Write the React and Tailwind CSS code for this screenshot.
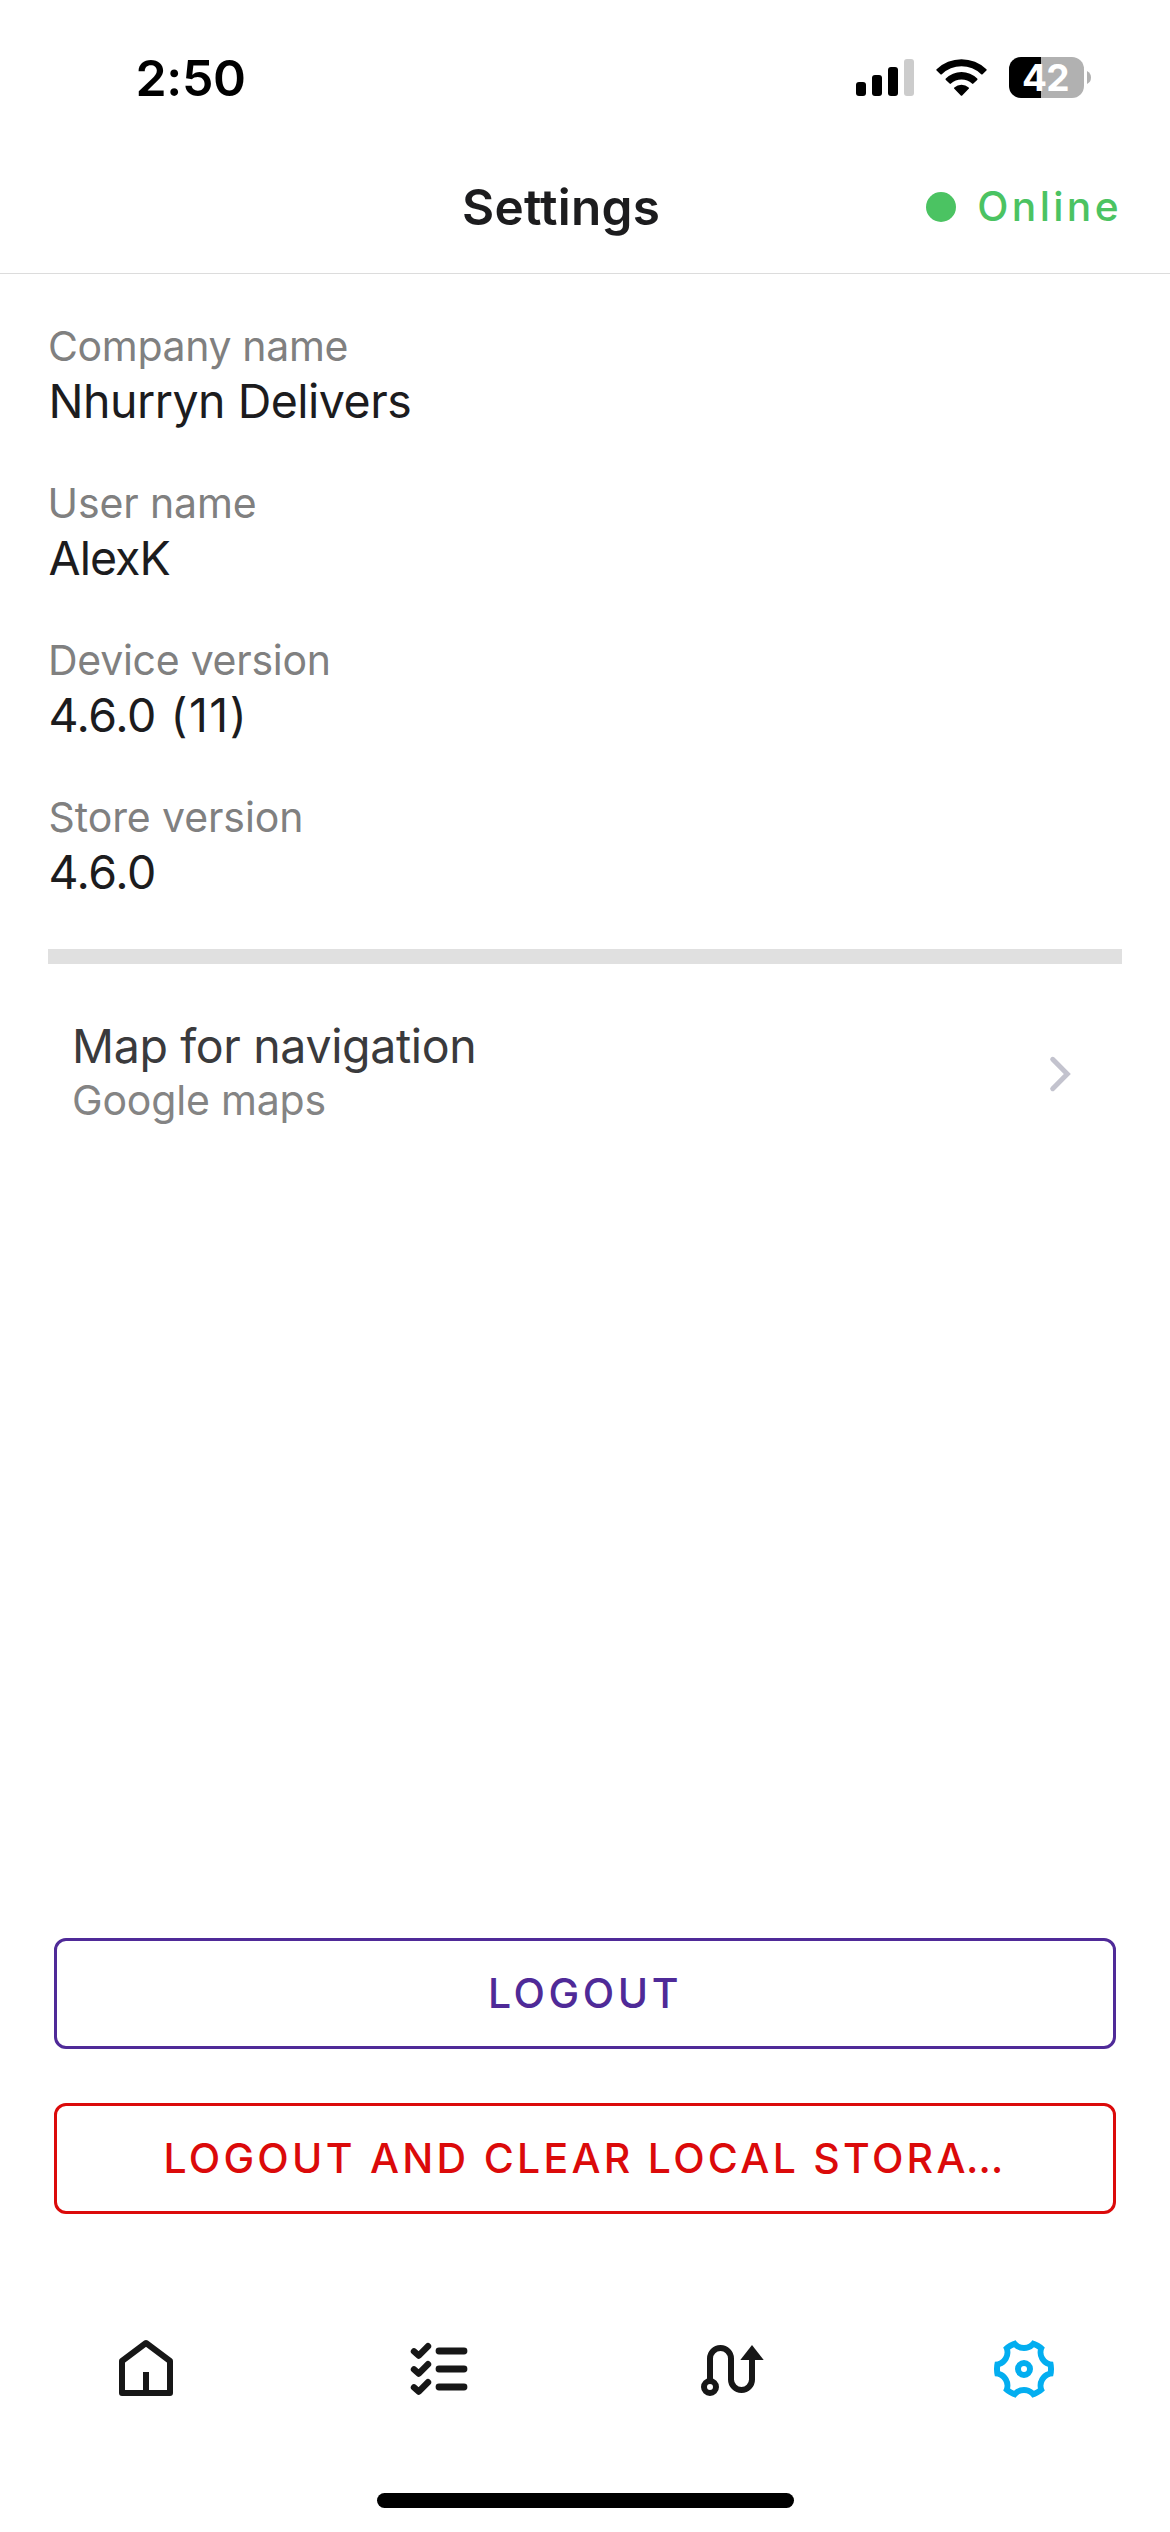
import React from "react";

const DETAILS = [
  { label: "Company name", value: "Nhurryn Delivers", labelClass: "-ml-[0.5px] tracking-[-0.35px]", valueClass: "tracking-[-0.5px]" },
  { label: "User name", value: "AlexK", labelClass: "-ml-px tracking-[-0.11px]", valueClass: "tracking-[-0.95px]" },
  { label: "Device version", value: "4.6.0", build: " (11)", labelClass: "-ml-[0.5px] tracking-[-0.27px]", valueClass: "tracking-[-0.42px]" },
  { label: "Store version", value: "4.6.0", labelClass: "tracking-[-0.09px]", valueClass: "tracking-[-0.42px]" },
];

function SignalIcon() {
  return (
    <svg width="58" height="37" viewBox="0 0 58 37" fill="#000">
      <rect x="0" y="23" width="10" height="14" rx="3" />
      <rect x="16" y="16" width="10" height="21" rx="3" />
      <rect x="32" y="8" width="10" height="29" rx="3" />
      <rect x="48" y="0" width="10" height="37" rx="3" fill="#ccc" />
    </svg>
  );
}

function WifiIcon() {
  return (
    <svg width="51" height="37" viewBox="0 0 51 37" fill="#000">
      <path d="M.6 10.3A35.6 35.6 0 0 1 50.4 10.3Q51 11 50.4 11.6L46.6 15.3Q45.9 15.9 45.2 15.3A28.2 28.2 0 0 0 5.8 15.3Q5.1 15.9 4.4 15.3L.6 11.6Q0 11 .6 10.3Z" />
      <path d="M9.8 19.5A22.3 22.3 0 0 1 41.2 19.5Q41.9 20.2 41.2 20.9L37.4 24.6Q36.7 25.2 36 24.6A15.2 15.2 0 0 0 15 24.6Q14.3 25.2 13.6 24.6L9.8 20.9Q9.1 20.2 9.8 19.5Z" />
      <path d="M18.3 28.4A11 11 0 0 1 32.7 28.4Q33.4 29.1 32.7 29.8L26.2 36.4Q25.5 37 24.8 36.4L18.3 29.8Q17.6 29.1 18.3 28.4Z" />
    </svg>
  );
}

function Battery() {
  return (
    <div className="flex items-center">
      <div className="flex h-[41px] w-[75px] items-center rounded-[12px] bg-[linear-gradient(90deg,#000_32px,#b1b1b1_32px)] pl-[13px]">
        <span className="text-[37px] leading-[45px] font-bold tracking-[-0.72px] text-white">42</span>
      </div>
      <svg className="ml-[3px]" width="4" height="13" viewBox="0 0 4 13">
        <path d="M0 0Q4 2 4 6.5T0 13Z" fill="#b1b1b1" />
      </svg>
    </div>
  );
}

function HomeIcon() {
  return (
    <svg width="72" height="72" viewBox="0 0 72 72" fill="none" stroke="#171717" strokeWidth="6" strokeLinejoin="round">
      <path d="M12 60V28L36 10L60 28V60Z" />
      <path d="M36 39V60" />
    </svg>
  );
}

function TasksIcon() {
  return (
    <svg width="72" height="72" viewBox="0 0 72 72" fill="none" stroke="#171717" strokeWidth="6.4" strokeLinecap="round" strokeLinejoin="round">
      {[18, 36, 54].map((y) => (
        <g key={y} transform={`translate(0 ${y})`}>
          <path d="M11 0.3L15.8 4.6L25 -4.8" />
          <path d="M36 0H61" strokeWidth="6.8" />
        </g>
      ))}
    </svg>
  );
}

function RouteIcon() {
  return (
    <svg width="72" height="72" viewBox="0 0 72 72" fill="none" stroke="#171717" strokeWidth="6">
      <circle cx="15" cy="54" r="6" />
      <path d="M15 46V25.5A10.5 10.5 0 0 1 36 25.5V46.5A10.5 10.5 0 0 0 57 46.5V26" />
      <path d="M57 12L68.7 27H45.3Z" fill="#171717" stroke="none" />
    </svg>
  );
}

// Outline of a six-notched disc: arcs of the disc joined by concave arcs.
function notchedDisc(radius, notchHalfAngle, notchRadius) {
  const point = (deg) => {
    const a = (deg * Math.PI) / 180;
    return `${(36 + radius * Math.sin(a)).toFixed(2)} ${(36 - radius * Math.cos(a)).toFixed(2)}`;
  };
  let d = `M${point(-notchHalfAngle)}`;
  for (let k = 0; k < 6; k++) {
    d += `A${notchRadius} ${notchRadius} 0 0 0 ${point(k * 60 + notchHalfAngle)}`;
    d += `A${radius} ${radius} 0 0 1 ${point((k + 1) * 60 - notchHalfAngle)}`;
  }
  return d + "Z";
}

function GearIcon() {
  return (
    <svg width="72" height="72" viewBox="0 0 72 72" fill="#03aef0">
      <path fillRule="evenodd" d={notchedDisc(30, 16.1, 9.6) + notchedDisc(24, 24.5, 14.9)} />
      <circle cx="36" cy="36" r="6" fill="none" stroke="#03aef0" strokeWidth="6" />
    </svg>
  );
}

function OutlineButton({ className, children }) {
  return (
    <button className={`flex h-[111px] w-full items-center justify-center rounded-[12px] border-3 pb-px text-[41px] leading-[50px] font-medium whitespace-nowrap ${className}`}>
      {children}
    </button>
  );
}

export default function App() {
  return (
    <div className="flex h-[2532px] w-[1170px] flex-col overflow-hidden bg-white font-[Inter,sans-serif] text-[#1c1c1e]">
      <div className="flex h-[141px] items-center pt-[15px] text-black">
        <span className="ml-[135.5px] w-[720.5px] text-[50px] leading-[60px] font-semibold tracking-[-0.35px]">2:50</span>
        <div className="-mt-px flex items-center">
          <SignalIcon />
          <div className="ml-[22px]"><WifiIcon /></div>
          <div className="ml-[22px]"><Battery /></div>
        </div>
      </div>

      <header className="flex h-[133px] items-center justify-between border-b border-[#dcdcdc]">
        <h1 className="ml-[462px] text-[49.5px] leading-[60px] font-semibold tracking-[0.23px]">Settings</h1>
        <div className="flex w-[244px] items-center text-[#4bc362]">
          <span className="size-[30px] rounded-full bg-[#4bc362]" />
          <span className="mb-px ml-[21.3px] text-[40.7px] leading-[49px] font-medium tracking-[3.35px]">Online</span>
        </div>
      </header>

      <main className="flex flex-1 flex-col px-12 pt-[47px]">
        <dl>
          {DETAILS.map((d) => (
            <div key={d.label} className="mb-[49px] pl-[0.5px]">
              <dt className={`mb-0.5 text-[41px] leading-[50px] text-[#808080] ${d.labelClass}`}>{d.label}</dt>
              <dd className={`text-[46.5px] leading-[56px] ${d.valueClass}`}>
                {d.value}
                {d.build && <span className="tracking-[1.48px]">{d.build}</span>}
              </dd>
            </div>
          ))}
        </dl>
        <div className="h-[15px] bg-[#e0e0e0]" />
        <div className="mt-[54px] flex items-center justify-between pr-[44px] pl-6">
          <div>
            <div className="mb-px text-[46.5px] leading-[56px] tracking-[-0.35px] text-[#3a3a3c]">Map for navigation</div>
            <div className="text-[41px] leading-[50px] tracking-[-0.18px] text-[#848484]">Google maps</div>
          </div>
          <svg className="mt-[5px]" width="30" height="40" viewBox="0 0 30 40" fill="none" stroke="#c3c3ce" strokeWidth="5" strokeLinecap="round">
            <path d="M4.7 5.3L19.3 20L4.7 34.7" />
          </svg>
        </div>

        <div className="mt-auto mb-[72px] flex flex-col gap-[54px] px-1.5">
          <OutlineButton className="border-[#4f2a98] tracking-[3.56px] text-[#4f2a98]">LOGOUT</OutlineButton>
          <OutlineButton className="border-[#db0a0a] tracking-[3.28px] text-[#db0a0a]">
            LOGOUT AND CLEAR LOCAL STORA<span className="-ml-[2.8px]">…</span>
          </OutlineButton>
        </div>
      </main>

      <nav className="flex h-[207px] pt-[47px] pl-[110px]">
        <HomeIcon />
        <div className="ml-[221px]"><TasksIcon /></div>
        <div className="ml-[220px]"><RouteIcon /></div>
        <div className="ml-[221px]"><GearIcon /></div>
      </nav>
      <div className="mx-auto mb-6 h-[15px] w-[417px] shrink-0 rounded-full bg-black" />
    </div>
  );
}
